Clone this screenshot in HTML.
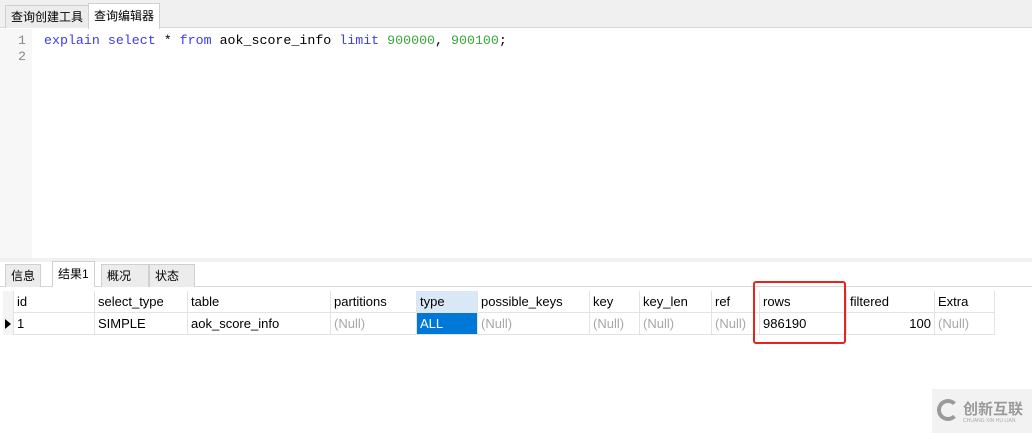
<!DOCTYPE html>
<html><head><meta charset="utf-8"><style>
*{margin:0;padding:0;box-sizing:border-box}
body{width:1032px;height:433px;background:#fff;position:relative;overflow:hidden;font-family:"Liberation Sans","Noto Sans CJK SC",sans-serif;font-size:13px;color:#000}
.a{position:absolute}
.tab{position:absolute;border:1px solid #d0d0d0;border-bottom:none;background:#ececec;font-size:12px;padding:0 5px;line-height:22px}
.mono{font-family:"Liberation Mono",monospace;font-size:13.3px}
.c{position:absolute;border-right:1px solid #e3e3e3;border-bottom:1px solid #e3e3e3;height:22px;line-height:22px;padding-left:3px;white-space:nowrap}
.n{color:#a8a8a8}
</style></head><body>
<div class="a" style="left:0;top:0;width:1032px;height:28px;background:#f0f0f0;border-bottom:1px solid #d8d8d8"></div>
<div class="tab" style="left:5px;top:5px;height:23px">查询创建工具</div>
<div class="tab" style="left:88px;top:3px;height:26px;background:#fff;line-height:24px">查询编辑器</div>
<div class="a" style="left:0;top:29px;width:32px;height:229px;background:#f7f7f7"></div>
<div class="a mono" style="left:18px;top:33px;color:#888;line-height:16px">1<br>2</div>
<div class="a mono" style="left:44px;top:33px;line-height:16px;white-space:pre"><span style="color:#3c3cf0">explain select</span> * <span style="color:#3c3cf0">from</span> aok_score_info <span style="color:#3c3cf0">limit</span> <span style="color:#3aa53a">900000</span>, <span style="color:#3aa53a">900100</span>;</div>
<div class="a" style="left:0;top:258px;width:1032px;height:4px;background:#f0f0f0"></div>
<div class="a" style="left:0;top:262px;width:1032px;height:25px;background:#fff;border-bottom:1px solid #d8d8d8"></div>
<div class="tab" style="left:5px;top:264px;height:23px">信息</div>
<div class="tab" style="left:52px;top:261px;height:26px;background:#fff;line-height:24px">结果1</div>
<div class="tab" style="left:101px;top:264px;height:23px;width:48px">概况</div>
<div class="tab" style="left:149px;top:264px;height:23px;width:46px">状态</div>
<div class="a" style="left:3px;top:291px;width:11px;height:44px;background:#f4f4f4;border-right:1px solid #e3e3e3"></div>
<div class="a" style="left:5px;top:319px;width:0;height:0;border-left:6px solid #000;border-top:5px solid transparent;border-bottom:5px solid transparent"></div>
<div class="c" style="left:14px;top:291px;width:81px">id</div>
<div class="c" style="left:95px;top:291px;width:93px">select_type</div>
<div class="c" style="left:188px;top:291px;width:143px">table</div>
<div class="c" style="left:331px;top:291px;width:86px">partitions</div>
<div class="c" style="left:417px;top:291px;width:61px;background:#d9e8f6">type</div>
<div class="c" style="left:478px;top:291px;width:112px">possible_keys</div>
<div class="c" style="left:590px;top:291px;width:50px">key</div>
<div class="c" style="left:640px;top:291px;width:72px">key_len</div>
<div class="c" style="left:712px;top:291px;width:48px">ref</div>
<div class="c" style="left:760px;top:291px;width:87px">rows</div>
<div class="c" style="left:847px;top:291px;width:88px">filtered</div>
<div class="c" style="left:935px;top:291px;width:60px">Extra</div>
<div class="c" style="left:14px;top:313px;width:81px">1</div>
<div class="c" style="left:95px;top:313px;width:93px">SIMPLE</div>
<div class="c" style="left:188px;top:313px;width:143px">aok_score_info</div>
<div class="c n" style="left:331px;top:313px;width:86px">(Null)</div>
<div class="c" style="left:417px;top:313px;width:61px;background:#0078d7;color:#fff">ALL</div>
<div class="c n" style="left:478px;top:313px;width:112px">(Null)</div>
<div class="c n" style="left:590px;top:313px;width:50px">(Null)</div>
<div class="c n" style="left:640px;top:313px;width:72px">(Null)</div>
<div class="c n" style="left:712px;top:313px;width:48px">(Null)</div>
<div class="c" style="left:760px;top:313px;width:87px">986190</div>
<div class="c" style="left:847px;top:313px;width:88px;text-align:right;padding-right:3px">100</div>
<div class="c n" style="left:935px;top:313px;width:60px">(Null)</div>
<div class="a" style="left:753px;top:281px;width:93px;height:63px;border:2px solid #e8221c;border-radius:3px"></div>
<div class="a" style="left:932px;top:389px;width:100px;height:44px;background:#f2f2f2"></div>
<div class="a" style="left:937px;top:399px;width:22px;height:22px;border:4px solid #9a9a9a;border-radius:50%;border-right-color:transparent"></div>
<div class="a" style="left:963px;top:398px;font-size:15px;color:#9a9a9a;font-weight:bold">创新互联</div>
<div class="a" style="left:963px;top:418px;font-size:5px;color:#aaa">CHUANG XIN HU LIAN</div>
</body></html>
